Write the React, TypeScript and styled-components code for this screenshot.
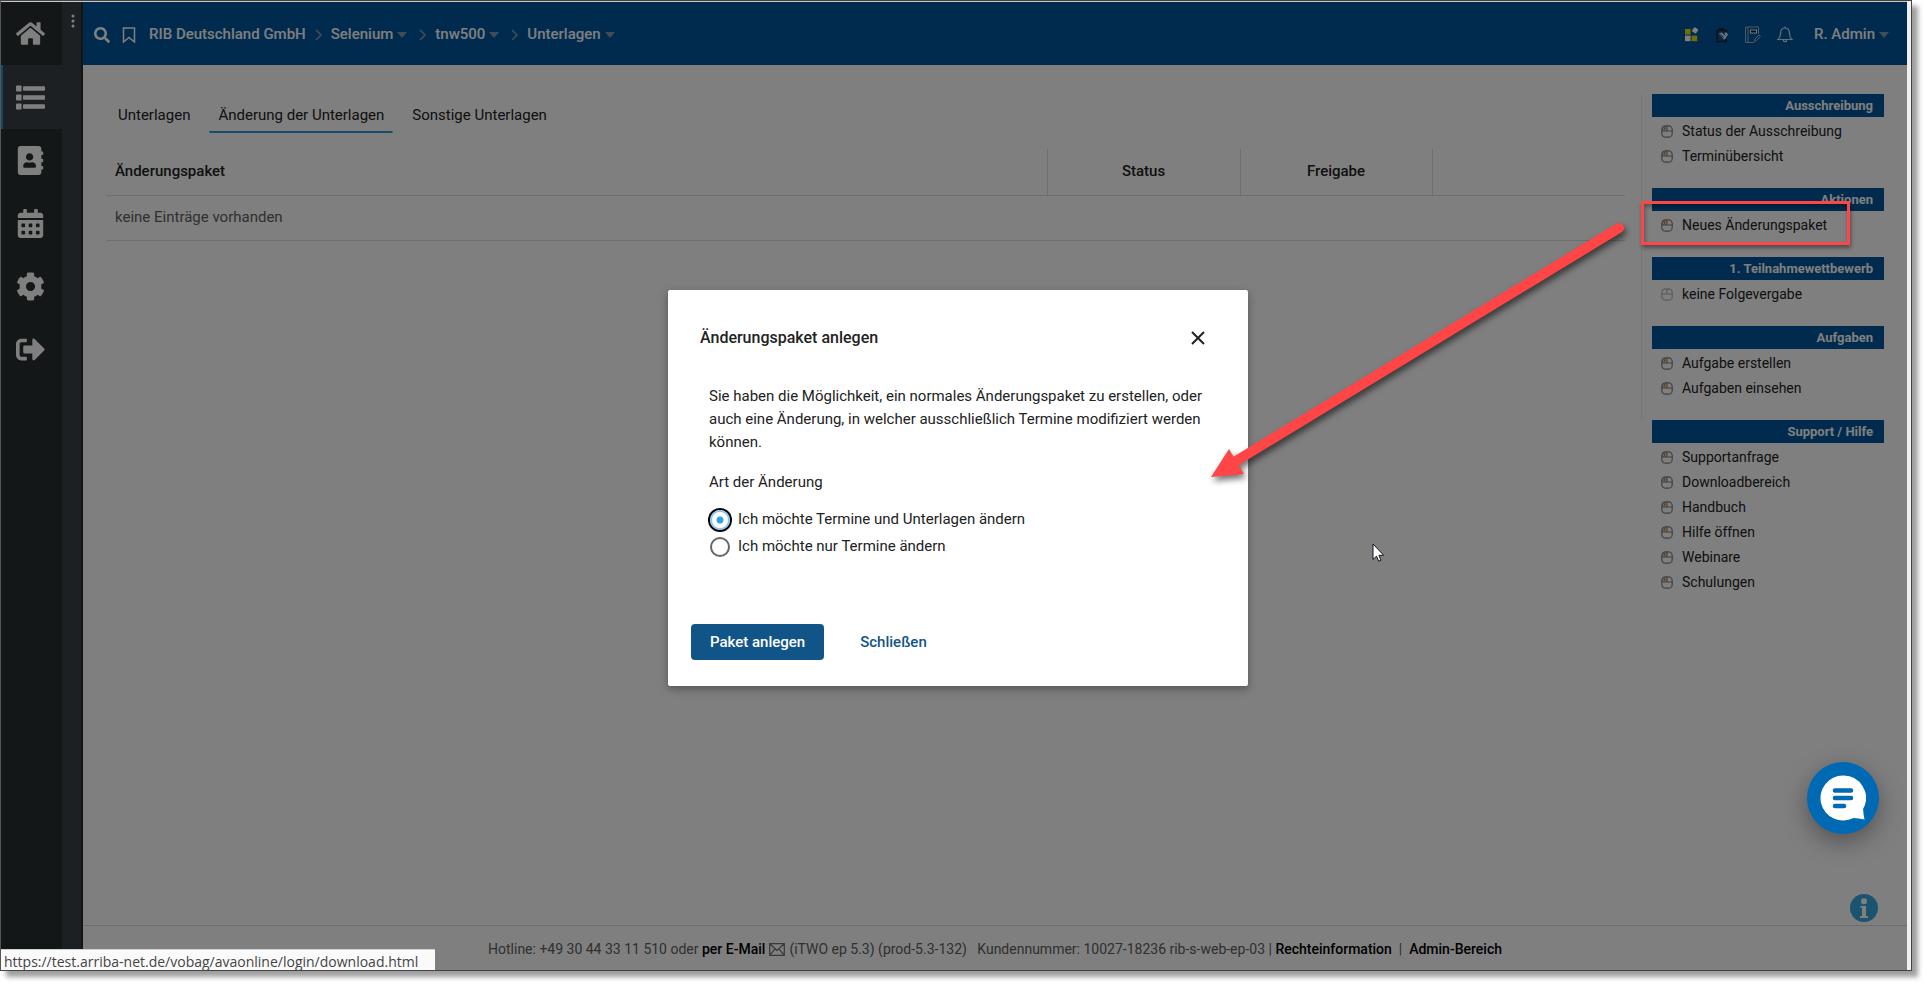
import React from 'react';
import styled, { createGlobalStyle, css } from 'styled-components';
import { FaHome, FaAddressBook, FaCalendarAlt, FaCog, FaSignOutAlt, FaSearch } from 'react-icons/fa';

const GlobalStyle = createGlobalStyle`
  *, *::before, *::after { box-sizing: border-box; }
  body {
    margin: 0;
    background: #fff;
    color: #222;
    font: 400 15px/23px Roboto, "Liberation Sans", sans-serif;
  }
  a { color: inherit; text-decoration: none; }
  button { font: inherit; cursor: pointer; }
`;

const Page = styled.div`
  min-height: 100vh;
  padding: 0 15px 15px 0;
  display: flex;
`;

const Frame = styled.div`
  position: relative;
  flex: 1;
  min-width: 0;
  display: flex;
  border: 1px solid #444;
  border-left-color: #555;
  box-shadow: 6px 6px 5px rgba(0, 0, 0, 0.38);
`;

const Shell = styled.div`
  position: relative;
  flex: 1;
  min-width: 0;
  display: flex;
  border-top: 1px solid #c8c8c8;
`;

const ScrollTrack = styled.div`
  width: 4px;
  background: #f0f0f0;
`;

const IconRail = styled.nav`
  width: 61px;
  display: flex;
  flex-direction: column;
  background: #262e2e;
`;

const RailLink = styled.a<{ $active?: boolean }>`
  height: 63px;
  padding-right: 2px;
  display: flex;
  align-items: center;
  justify-content: center;
  color: #fff;
  ${(p) => p.$active && css`
    height: 64px;
    background: #3a4046;
    box-shadow: inset 2px 0 #2f8fc4;
  `}
`;

const SubRail = styled.div`
  width: 21px;
  padding: 12px 0 0 2px;
  display: flex;
  justify-content: center;
  align-items: flex-start;
  background: #3a4046;
  border-right: 2px solid #26292d;
`;

const MenuDots = styled.button`
  border: 0;
  padding: 0;
  background: none;
  color: #fff;
  display: flex;
`;

const Main = styled.div`
  flex: 1;
  min-width: 0;
  display: flex;
  flex-direction: column;
  background: #fff;
`;

const TopBar = styled.header`
  height: 63px;
  padding: 2px 18px 0 11px;
  display: flex;
  align-items: center;
  justify-content: space-between;
  background: #00569c;
  color: #fff;
  font-weight: 500;
`;

const BarGroup = styled.div<{ $gap: number }>`
  display: flex;
  align-items: center;
  gap: ${(p) => p.$gap}px;
`;

const Crumbs = styled.nav`
  padding-left: 1px;
  display: flex;
  align-items: center;
  gap: 9px;
`;

const Crumb = styled.a`
  display: flex;
  align-items: center;
  gap: 4px;
`;

const UserLink = styled(Crumb)`
  padding-left: 5px;
`;

const IconButton = styled.button`
  border: 0;
  padding: 0;
  background: none;
  color: inherit;
  display: flex;
`;

const Caret = styled.span`
  border: 5px solid transparent;
  border-top: 6px solid #8099b0;
  border-bottom: 0;
  ${Crumbs} & { margin-right: 3px; }
`;

const Body = styled.div`
  flex: 1;
  display: flex;
  padding: 29px 23px 0;
`;

const Content = styled.main`
  flex: 1;
  min-width: 0;
`;

const Tabs = styled.nav`
  display: flex;
  gap: 10px;
  padding: 8px 0 0 3px;
`;

const Tab = styled.a<{ $active?: boolean }>`
  height: 31px;
  padding: 2px 9px 0;
  border-bottom: 2px solid ${(p) => (p.$active ? '#2f9bd8' : 'transparent')};
  border-radius: 2px;
`;

const DataTable = styled.table`
  width: calc(100% - 16px);
  margin-top: 16px;
  border-collapse: collapse;
  table-layout: fixed;
`;

const HeadCell = styled.th<{ $width?: string; $start?: boolean; $last?: boolean }>`
  width: ${(p) => p.$width || 'auto'};
  height: 46px;
  padding: 0 9px;
  font-weight: 500;
  text-align: ${(p) => (p.$start ? 'left' : 'center')};
  border-bottom: 1px solid #dcdcdc;
  border-right: ${(p) => (p.$last ? '0' : '1px solid #dcdcdc')};
`;

const Cell = styled.td`
  height: 45px;
  padding: 0 9px;
  color: #606060;
  border-bottom: 1px solid #dcdcdc;
`;

const Aside = styled.aside`
  width: 243px;
  display: flex;
  flex-direction: column;
`;

const AsideGroup = styled.div<{ $ruled?: boolean }>`
  padding-left: 10px;
  border-left: 1px solid ${(p) => (p.$ruled ? '#ececec' : 'transparent')};
`;

const Section = styled.section`
  padding-bottom: 19px;
`;

const SectionTitle = styled.h2`
  margin: 0 0 2px;
  padding: 0 11px;
  font-size: 13px;
  line-height: 23px;
  font-weight: 700;
  text-align: right;
  background: #00569c;
  color: #fff;
`;

const LinkList = styled.ul`
  margin: 0;
  padding: 0;
  list-style: none;
`;

const LinkItem = styled.li`
  height: 25px;
  padding-left: 9px;
  display: flex;
  align-items: center;
  font-size: 14px;
`;

const SideLink = styled.a`
  display: flex;
  align-items: center;
  gap: 9px;
`;

const MarkedArea = styled.div`
  position: absolute;
  z-index: 3;
  right: 57px;
  top: 199px;
  width: 209px;
  height: 44px;
  border: 3px solid #ff4545;
  box-shadow: 1px 3px 4px rgba(0, 0, 0, 0.4), inset 1px 3px 4px rgba(0, 0, 0, 0.35);
  pointer-events: none;
`;

const Footer = styled.footer`
  height: 45px;
  padding-top: 3px;
  border-top: 1px solid #dcdcdc;
  display: flex;
  align-items: center;
  justify-content: center;
  gap: 4px;
  font-size: 14px;
  color: #606060;
  white-space: pre;
`;

const FooterLink = styled.a`
  font-weight: 500;
  color: #000;
`;

const InfoButton = styled.a`
  position: absolute;
  right: 29px;
  bottom: 48px;
  display: flex;
`;

const Backdrop = styled.div`
  position: absolute;
  z-index: 2;
  inset: 0;
  padding: 4px 0 0 8px;
  display: flex;
  align-items: center;
  justify-content: center;
  background: rgba(0, 0, 0, 0.5);
`;

const Dialog = styled.form`
  width: 580px;
  padding: 32px 24px 26px 23px;
  display: flex;
  flex-direction: column;
  background: #fff;
  border-radius: 2px;
  box-shadow: 0 3px 8px rgba(0, 0, 0, 0.35);
`;

const DialogHead = styled.div`
  padding: 4px 19px 0 9px;
  display: flex;
  align-items: center;
  justify-content: space-between;
`;

const DialogTitle = styled.h1`
  margin: 0;
  font-size: 16px;
  line-height: 23px;
  font-weight: 500;
`;

const DialogText = styled.p`
  margin: 36px 18px 0;
`;

const Choices = styled.fieldset`
  margin: 17px 18px 64px;
  padding: 0;
  border: 0;
`;

const Legend = styled.legend`
  padding: 0;
  margin-bottom: 12px;
`;

const Choice = styled.label`
  height: 27px;
  display: flex;
  align-items: center;
  gap: 8px;
`;

const Radio = styled.input`
  appearance: none;
  width: 20px;
  height: 20px;
  margin: 0 0 0 1px;
  border: 2px solid #666;
  border-radius: 50%;
  &:checked {
    border-color: #8cc8f0;
    background: radial-gradient(circle, #2f9fe8 0 3px, #fff 4px);
    box-shadow: 0 0 0 2px #000;
  }
`;

const Actions = styled.div`
  display: flex;
  gap: 20px;
`;

const ActionButton = styled.button<{ $primary?: boolean }>`
  height: 36px;
  padding: 0 ${(p) => (p.$primary ? 19 : 16)}px;
  border: 0;
  border-radius: 4px;
  font-weight: 500;
  background: ${(p) => (p.$primary ? '#115588' : 'transparent')};
  color: ${(p) => (p.$primary ? '#fff' : '#115588')};
`;

const ChatButton = styled.button`
  position: absolute;
  z-index: 3;
  right: 28px;
  bottom: 136px;
  width: 72px;
  height: 72px;
  border: 0;
  padding: 0;
  border-radius: 50%;
  display: flex;
  align-items: center;
  justify-content: center;
  background: #0069b4;
  box-shadow: 0 8px 24px rgba(0, 0, 0, 0.35);
`;

const LinkStatus = styled.div`
  position: absolute;
  z-index: 4;
  left: 0;
  bottom: 0;
  width: 434px;
  height: 21px;
  padding: 0 3px;
  border-top: 1px solid #d0d0d0;
  background: #fafafa;
  color: #444;
  font: 14px/24px "Open Sans", "Noto Sans", sans-serif;
  white-space: nowrap;
`;

const ArrowDrawing = styled.svg`
  position: absolute;
  z-index: 4;
  right: 276px;
  top: 210px;
  overflow: visible;
  pointer-events: none;
  filter: drop-shadow(2px 4px 3px rgba(0, 0, 0, 0.55));
`;

const CursorDrawing = styled.svg`
  position: absolute;
  z-index: 4;
  right: 522px;
  top: 541px;
  pointer-events: none;
`;

const ListIcon = () => (
  <svg width="29" height="25" viewBox="0 0 29 25" fill="currentColor">
    {[0, 9, 18].map((y) => (
      <g key={y}>
        <rect x="0" y={y + 0.5} width="5.6" height="6" rx="1" />
        <rect x="7" y={y + 1.2} width="22" height="4.6" rx="0.8" />
      </g>
    ))}
  </svg>
);

const DotsIcon = () => (
  <svg width="4" height="14" viewBox="0 0 4 14" fill="currentColor">
    {[2, 7, 12].map((y) => <circle key={y} cx="2" cy={y} r="1.5" />)}
  </svg>
);

const BookmarkIcon = () => (
  <svg width="14" height="16" viewBox="0 0 14 16" fill="none" stroke="currentColor" strokeWidth="1.5">
    <path d="M1.5 1h11v14L7 10.5 1.5 15z" />
  </svg>
);

const ChevronIcon = () => (
  <svg width="7" height="12" viewBox="0 0 7 12" fill="none" stroke="#8099b0" strokeWidth="1.6">
    <path d="M1 1l5 5-5 5" />
  </svg>
);

const WidgetsIcon = () => (
  <svg width="15" height="15" viewBox="0 0 15 15">
    <rect x="1" y="2" width="5.6" height="5.6" fill="#e6dc00" />
    <rect x="1" y="8.6" width="5.6" height="5.6" fill="#fff" />
    <rect x="7.6" y="8.6" width="5.6" height="5.6" fill="#e6dc00" />
    <rect x="8.6" y="0.8" width="5" height="5" rx="1" fill="#fff" transform="rotate(35 11 3.3)" />
  </svg>
);

const PluginIcon = () => (
  <svg width="14" height="16" viewBox="0 0 14 16">
    <path d="M2 3.5h9v11H2z" fill="none" stroke="#202428" strokeWidth="1.6" />
    <path d="M4 1h5v3H4z" fill="#202428" />
    <path d="M4 6.500l3-1 1.500 2L11 5l2 2.500-3 5-1.500-.5z" fill="#d8e8f4" />
    <path d="M5.500 7.500l3.500 3M9 7l1.500 1.500" stroke="#1a4a70" strokeWidth="1" />
  </svg>
);

const NotebookIcon = () => (
  <svg width="16" height="17" viewBox="0 0 16 17" fill="none" stroke="#9db4c8" strokeWidth="1">
    <path d="M13.5 8V1H.5v15.500H9M3 1v15.500" />
    <path d="M9.500 15.500l.5-2.500 4-4 1.500 1.500-4 4z" />
    <rect x="5.500" y="4" width="6" height="3" fill="#111" stroke="#e8f2fa" />
  </svg>
);

const BellIcon = () => (
  <svg width="16" height="17" viewBox="0 0 16 17" fill="none" stroke="#d5e0ea" strokeWidth="1.2">
    <path d="M8 .5V2M1 13.500c2-1.700 2.500-3 2.500-6C3.500 4.300 5.300 2 8 2s4.500 2.300 4.500 5.500c0 3 .5 4.300 2.500 6zM6.300 14a1.700 1.700 0 0 0 3.400 0" />
  </svg>
);

const MouseIcon = ({ muted }: { muted?: boolean }) => (
  <svg width="12" height="13" viewBox="0 0 12 13" fill="none" stroke={muted ? '#b4b4b4' : '#808080'} strokeWidth="1.2">
    {!muted && <path d="M1 6V3q0-2 2-2h2.500v5z" fill="#f0c8a0" stroke="none" />}
    <rect x=".8" y=".8" width="10.4" height="11.4" rx="3.8" />
    <path d="M1 6h10M6 1v5" />
    {!muted && <path d="M3.500 2.300v2.200" stroke="#c07030" />}
  </svg>
);

const EnvelopeIcon = () => (
  <svg width="16" height="13" viewBox="0 0 16 13" fill="none" stroke="#707070" strokeWidth="1.2">
    <path d="M.7 .7h14.600v11.600H.7zM.7 .7L8 7.500 15.300.7M.7 12.300L6 5.800M15.300 12.300L10 5.800" />
  </svg>
);

const InfoIcon = () => (
  <svg width="28" height="28" viewBox="0 0 28 28">
    <circle cx="14" cy="14" r="14" fill="#38a8e0" />
    <circle cx="14" cy="7.3" r="3" fill="#fff" />
    <path d="M10.500 12h5.500v10h2v2h-8v-2h2v-8h-1.500z" fill="#fff" />
  </svg>
);

const CloseIcon = () => (
  <svg width="14" height="14" viewBox="0 0 14 14" fill="none" stroke="#222" strokeWidth="2">
    <path d="M1 1l12 12M13 1L1 13" />
  </svg>
);

const ChatIcon = () => (
  <svg width="46" height="46" viewBox="0 0 46 46">
    <path d="M23 .5a22.500 22.500 0 1 0 10.500 42.400q5 .2 11 1.600-1.200-5-1.400-10.500A22.500 22.500 0 0 0 23 .5z" fill="#fff" />
    <path d="M15 15.500h16M15 23h16M15 31h9" stroke="#0069b4" strokeWidth="4.600" strokeLinecap="round" />
  </svg>
);

const rail = [
  { label: 'Startseite', icon: <FaHome size={29} /> },
  { label: 'Liste', icon: <ListIcon />, active: true },
  { label: 'Adressbuch', icon: <FaAddressBook size={29} /> },
  { label: 'Kalender', icon: <FaCalendarAlt size={29} /> },
  { label: 'Einstellungen', icon: <FaCog size={29} /> },
  { label: 'Abmelden', icon: <FaSignOutAlt size={29} /> },
];

type SectionData = { title: string; links: string[]; muted?: boolean };

const sections: SectionData[] = [
  { title: 'Ausschreibung', links: ['Status der Ausschreibung', 'Terminübersicht'] },
  { title: 'Aktionen', links: ['Neues Änderungspaket'] },
  { title: '1. Teilnahmewettbewerb', links: ['keine Folgevergabe'], muted: true },
  { title: 'Aufgaben', links: ['Aufgabe erstellen', 'Aufgaben einsehen'] },
];

const support: SectionData = {
  title: 'Support / Hilfe',
  links: ['Supportanfrage', 'Downloadbereich', 'Handbuch', 'Hilfe öffnen', 'Webinare', 'Schulungen'],
};

const SideSection = ({ title, links, muted }: SectionData) => (
  <Section>
    <SectionTitle>{title}</SectionTitle>
    <LinkList>
      {links.map((text) => (
        <LinkItem key={text}>
          <SideLink href="#"><MouseIcon muted={muted} />{text}</SideLink>
        </LinkItem>
      ))}
    </LinkList>
  </Section>
);

export default function App() {
  return (
    <Page>
      <GlobalStyle />
      <Frame>
        <Shell>
          <IconRail aria-label="Hauptnavigation">
            {rail.map((r) => (
              <RailLink key={r.label} href="#" aria-label={r.label} $active={r.active}>{r.icon}</RailLink>
            ))}
          </IconRail>
          <SubRail>
            <MenuDots aria-label="Menü"><DotsIcon /></MenuDots>
          </SubRail>
          <Main>
            <TopBar>
              <BarGroup $gap={12}>
                <IconButton aria-label="Suche"><FaSearch size={16} /></IconButton>
                <IconButton aria-label="Lesezeichen"><BookmarkIcon /></IconButton>
                <Crumbs aria-label="Pfad">
                  <Crumb href="#">RIB Deutschland GmbH</Crumb>
                  <ChevronIcon />
                  <Crumb href="#">Selenium<Caret /></Crumb>
                  <ChevronIcon />
                  <Crumb href="#">tnw500<Caret /></Crumb>
                  <ChevronIcon />
                  <Crumb href="#">Unterlagen<Caret /></Crumb>
                </Crumbs>
              </BarGroup>
              <BarGroup $gap={16}>
                <IconButton aria-label="Module"><WidgetsIcon /></IconButton>
                <IconButton aria-label="Plugin"><PluginIcon /></IconButton>
                <IconButton aria-label="Notizen"><NotebookIcon /></IconButton>
                <IconButton aria-label="Benachrichtigungen"><BellIcon /></IconButton>
                <UserLink href="#">R. Admin<Caret /></UserLink>
              </BarGroup>
            </TopBar>
            <Body>
              <Content>
                <Tabs>
                  <Tab href="#">Unterlagen</Tab>
                  <Tab href="#" $active>Änderung der Unterlagen</Tab>
                  <Tab href="#">Sonstige Unterlagen</Tab>
                </Tabs>
                <DataTable>
                  <thead>
                    <tr>
                      <HeadCell $start>Änderungspaket</HeadCell>
                      <HeadCell $width="193px">Status</HeadCell>
                      <HeadCell $width="192px">Freigabe</HeadCell>
                      <HeadCell $width="193px" $last aria-label="Optionen" />
                    </tr>
                  </thead>
                  <tbody>
                    <tr><Cell colSpan={4}>keine Einträge vorhanden</Cell></tr>
                  </tbody>
                </DataTable>
              </Content>
              <Aside>
                <AsideGroup $ruled>
                  {sections.map((s) => <SideSection key={s.title} {...s} />)}
                </AsideGroup>
                <AsideGroup>
                  <SideSection {...support} />
                </AsideGroup>
              </Aside>
            </Body>
            <Footer>
              <span>Hotline: +49 30 44 33 11 510 oder <FooterLink href="#">per E-Mail</FooterLink></span>
              <EnvelopeIcon />
              <span>(iTWO ep 5.3) (prod-5.3-132)   Kundennummer: 10027-18236 rib-s-web-ep-03 | <FooterLink href="#">Rechteinformation</FooterLink>  |  <FooterLink href="#">Admin-Bereich</FooterLink></span>
            </Footer>
          </Main>
          <InfoButton href="#" aria-label="Information"><InfoIcon /></InfoButton>
          <Backdrop>
            <Dialog role="dialog" aria-labelledby="dialog-title">
              <DialogHead>
                <DialogTitle id="dialog-title">Änderungspaket anlegen</DialogTitle>
                <IconButton type="button" aria-label="Dialog schließen"><CloseIcon /></IconButton>
              </DialogHead>
              <DialogText>
                Sie haben die Möglichkeit, ein normales Änderungspaket zu erstellen, oder auch eine Änderung, in welcher ausschließlich Termine modifiziert werden können.
              </DialogText>
              <Choices>
                <Legend>Art der Änderung</Legend>
                <Choice><Radio type="radio" name="art" defaultChecked />Ich möchte Termine und Unterlagen ändern</Choice>
                <Choice><Radio type="radio" name="art" />Ich möchte nur Termine ändern</Choice>
              </Choices>
              <Actions>
                <ActionButton type="button" $primary>Paket anlegen</ActionButton>
                <ActionButton type="button">Schließen</ActionButton>
              </Actions>
            </Dialog>
          </Backdrop>
          <MarkedArea />
          <ArrowDrawing width="424" height="270" viewBox="1207 212 424 270">
            <path d="M1619 228L1236 461" stroke="#ff4545" strokeWidth="10" strokeLinecap="round" />
            <path d="M1211 477L1229 449 1244 474z" fill="#ff4545" />
          </ArrowDrawing>
          <CursorDrawing width="13" height="20" viewBox="0 0 13 20">
            <path d="M1 1v15.500l3.500-3.300 2.200 5 2.300-1-2.100-4.900h4.800z" fill="#fff" stroke="#1a1020" strokeWidth="1" />
          </CursorDrawing>
          <ChatButton aria-label="Chat"><ChatIcon /></ChatButton>
          <LinkStatus>https://test.arriba-net.de/vobag/avaonline/login/download.html</LinkStatus>
        </Shell>
        <ScrollTrack />
      </Frame>
    </Page>
  );
}
